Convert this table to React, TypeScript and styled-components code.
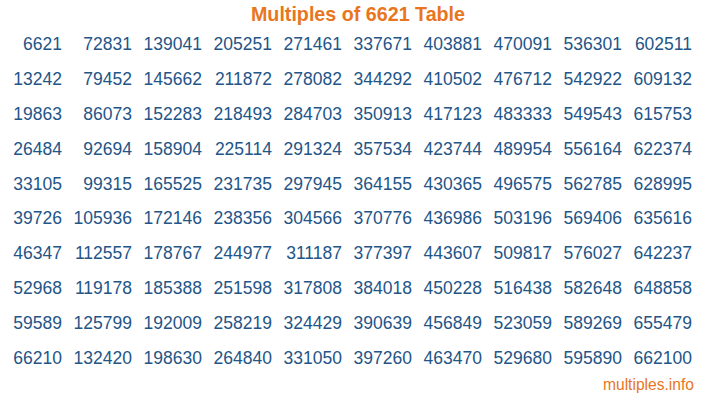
import styled, { createGlobalStyle } from 'styled-components';

const BASE = 6621;

const GlobalStyle = createGlobalStyle`
	body {
		margin: 0;
		background: #fff;
		font-family: 'Liberation Sans', Arial, sans-serif;
	}
`;

const Page = styled.div`
	width: 716px;
	height: 400px;
	display: flex;
	flex-direction: column;
`;

const Title = styled.h1`
	margin: 0;
	height: 27px;
	line-height: 28px;
	font-size: 19.7px;
	font-weight: bold;
	color: #e8761e;
	text-align: center;
`;

const Grid = styled.div`
	width: 700px;
	display: grid;
	grid-template-columns: repeat(10, 70px);
	grid-auto-rows: 34.9px;
`;

const Cell = styled.div`
	display: flex;
	align-items: center;
	justify-content: flex-end;
	padding-right: 8px;
	font-size: 17.5px;
	color: #235587;
`;

const Footer = styled.div`
	margin-top: 0;
	padding-right: 22px;
	text-align: right;
	font-size: 15.6px;
	color: #e8761e;
`;

function App() {
	const rows = Array.from({ length: 10 }, (_, r) => r);
	const cols = Array.from({ length: 10 }, (_, c) => c);

	return (
		<Page>
			<GlobalStyle />
			<Title>Multiples of {BASE} Table</Title>
			<Grid>
				{rows.map((r) =>
					cols.map((c) => (
						<Cell key={`${r}-${c}`}>{BASE * (c * 10 + r + 1)}</Cell>
					))
				)}
			</Grid>
			<Footer>multiples.info</Footer>
		</Page>
	);
}

export default App;
